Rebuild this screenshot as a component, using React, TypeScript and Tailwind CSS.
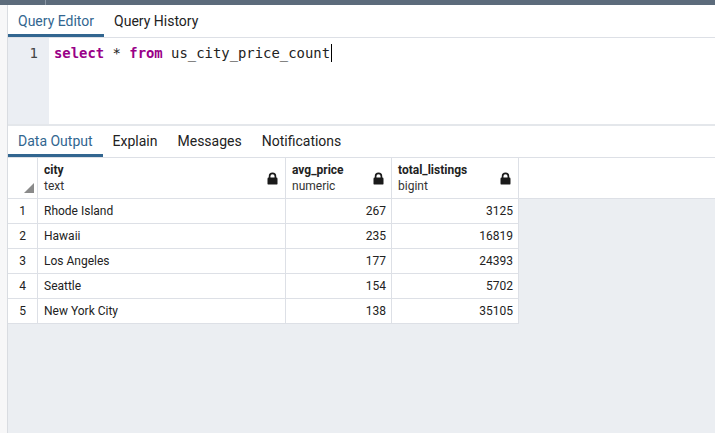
import React from "react";

const rows = [
  { city: "Rhode Island", avg: 267, total: 3125 },
  { city: "Hawaii", avg: 235, total: 16819 },
  { city: "Los Angeles", avg: 177, total: 24393 },
  { city: "Seattle", avg: 154, total: 5702 },
  { city: "New York City", avg: 138, total: 35105 },
];

const Lock = () => (
  <svg width="11" height="13" viewBox="0 0 11 13" className="shrink-0">
    <path d="M2.6 6V4.2a2.9 2.9 0 0 1 5.8 0V6" fill="none" stroke="#1a1a1a" strokeWidth="1.7" />
    <rect x="0.5" y="5.6" width="10" height="7" rx="1.2" fill="#1a1a1a" />
  </svg>
);

const Tab = ({ label, active }: { label: string; active?: boolean }) => (
  <div
    className={
      active
        ? "h-full flex items-center px-[10px] border-b-[3px] border-[#326690] text-[#326690] pt-[3px]"
        : "h-full flex items-center px-[10px] border-b-[3px] border-transparent text-[#222] pt-[3px]"
    }
  >
    {label}
  </div>
);

const HeaderCell = ({ name, type, w }: { name: string; type: string; w: string }) => (
  <div className={`${w} shrink-0 h-full border-r border-[#dde0e6] flex items-center justify-between pl-[6px] pr-[7px]`}>
    <div className="flex flex-col leading-[16px]">
      <span className="font-bold text-[12px] text-[#222]">{name}</span>
      <span className="text-[12px] text-[#333]">{type}</span>
    </div>
    <Lock />
  </div>
);

export default function App() {
  return (
    <div className="w-[715px] h-[433px] overflow-hidden flex flex-col bg-white font-['Roboto',sans-serif]">
      <div className="h-[5px] shrink-0 bg-[#5c6b7b] flex">
        <div className="w-[46px] border-r border-[#8c98a5]" />
      </div>
      <div className="flex flex-1 min-h-0">
        <div className="w-[8px] shrink-0 bg-[#f7f7f8] border-r border-[#d9dce1]" />
        <div className="flex-1 flex flex-col min-w-0">
          <div className="h-[33px] shrink-0 flex text-[14px] border-b border-[#dde0e6]">
            <Tab label="Query Editor" active />
            <Tab label="Query History" />
          </div>
          <div className="h-[88px] shrink-0 flex border-b-2 border-[#e4e7eb]">
            <div className="w-[41px] bg-[#ebeef3] text-right pr-[11px] pt-[6px] font-['DejaVu_Sans_Mono',monospace] text-[14px] leading-[18px] text-[#444]">
              1
            </div>
            <div className="pl-[5px] pt-[6px] font-['DejaVu_Sans_Mono',monospace] text-[13.9px] leading-[18px] text-[#222] flex">
              <span className="text-[#990088] font-bold">select</span>
              <span>&nbsp;*&nbsp;</span>
              <span className="text-[#990088] font-bold">from</span>
              <span>&nbsp;us_city_price_count</span>
              <span className="w-[1px] h-[18px] bg-black ml-[1px]" />
            </div>
          </div>
          <div className="h-[32px] shrink-0 flex text-[14px] border-b border-[#dde0e6]">
            <Tab label="Data Output" active />
            <Tab label="Explain" />
            <Tab label="Messages" />
            <Tab label="Notifications" />
          </div>
          <div className="flex-1 bg-[#ebeef2] flex flex-col">
            <div className="h-[41px] shrink-0 bg-white flex border-b border-[#dde0e6]">
              <div className="w-[30px] shrink-0 h-full border-r border-[#dde0e6] relative">
                <svg width="10" height="10" viewBox="0 0 10 10" className="absolute left-[16px] bottom-[5px]">
                  <polygon points="10,0 10,10 0,10" fill="#8a8a8a" />
                </svg>
              </div>
              <HeaderCell name="city" type="text" w="w-[248px]" />
              <HeaderCell name="avg_price" type="numeric" w="w-[106px]" />
              <HeaderCell name="total_listings" type="bigint" w="w-[127px]" />
            </div>
            {rows.map((r, i) => (
              <div key={r.city} className="h-[25px] flex w-[511px] bg-white text-[12px] text-[#222] border-b border-[#dde0e6]">
                <div className="w-[30px] shrink-0 border-r border-[#dde0e6] flex items-center justify-center">{i + 1}</div>
                <div className="w-[248px] shrink-0 border-r border-[#dde0e6] flex items-center pl-[6px]">{r.city}</div>
                <div className="w-[106px] shrink-0 border-r border-[#dde0e6] flex items-center justify-end pr-[5px]">{r.avg}</div>
                <div className="w-[127px] shrink-0 border-r border-[#dde0e6] flex items-center justify-end pr-[5px]">{r.total}</div>
              </div>
            ))}
          </div>
        </div>
      </div>
    </div>
  );
}
